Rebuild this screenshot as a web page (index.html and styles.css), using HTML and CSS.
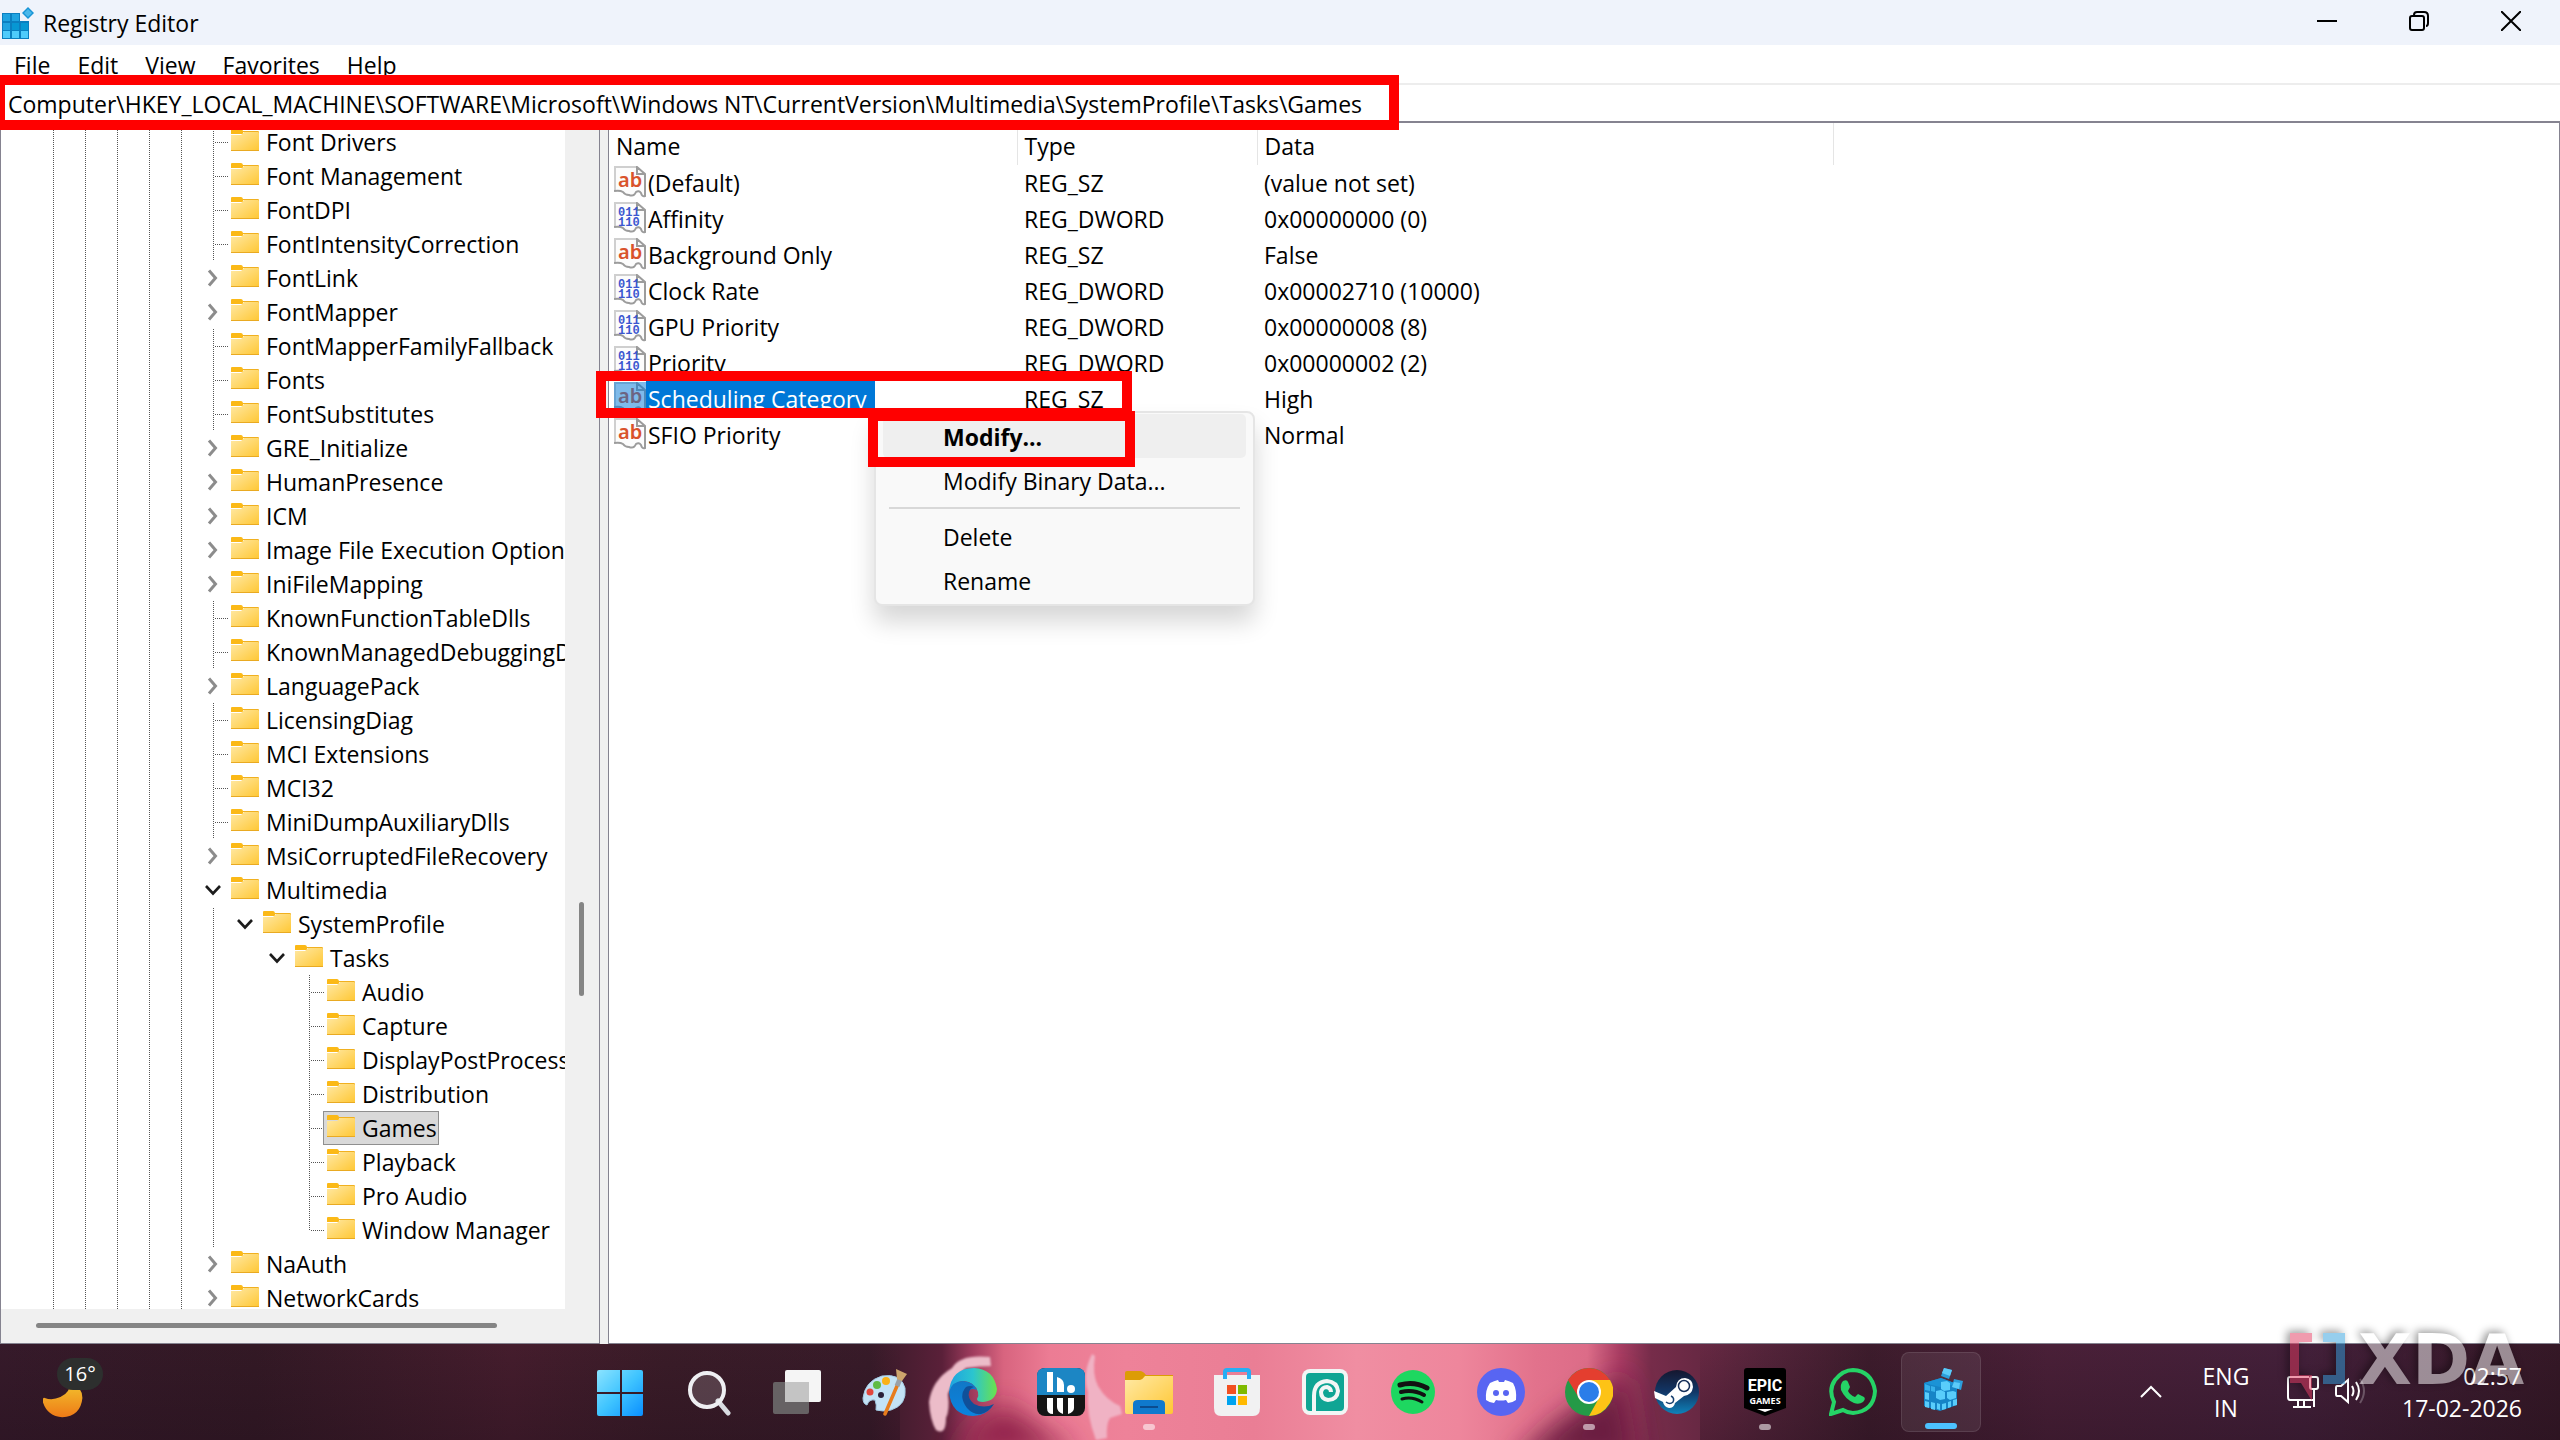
FILE: index.html
```html
<!DOCTYPE html>
<html lang="en">
<head>
<meta charset="utf-8">
<title>Registry Editor</title>
<link rel="stylesheet" href="styles.css">
</head>
<body>
<svg class="defs" aria-hidden="true">
  <defs>
    <linearGradient id="gFolder" x1="0" y1="0" x2="1" y2="1"><stop offset="0" stop-color="#ffe9a6"/><stop offset="1" stop-color="#ffc733"/></linearGradient>
    <symbol id="folder" viewBox="0 0 28 22">
      <path d="M0 1q0-1 1-1h9q1.500 0 2 2v3H0z" fill="#fbb917"/>
      <path d="M0 6h10l3-3h15v18q0 1-1 1H1q-1 0-1-1z" fill="url(#gFolder)"/>
      <path d="M12 2.500h15q1 0 1 1" fill="none" stroke="#f0b020"/>
      <path d="M0 21.500h28" stroke="#e9aa22"/>
    </symbol>
    <symbol id="closed" viewBox="0 0 12 18"><path d="M2 1.500l6.500 7.500L2 16.500" fill="none" stroke="#8c8c8c" stroke-width="3"/></symbol>
    <symbol id="open" viewBox="0 0 16 12"><path d="M1 2l7 7.500L15 2" fill="none" stroke="#1c1c1c" stroke-width="2.600"/></symbol>
    <symbol id="page" viewBox="0 0 32 32">
      <path d="M1 1h22l8 8v22l-5-6h-4l-3 4h-6l-4-4H1z" fill="#fcfcfc"/>
      <path d="M1 25V1h22" fill="none" stroke="#cfcfcf" stroke-width="2"/>
      <path d="M23 1v7h8zM31 8v22q-3 1-4-3-2-3-5-1-2 5-7 3-4 0-6-3-3-2-9-1" fill="none" stroke="#9c9c9c" stroke-width="2"/>
    </symbol>
    <symbol id="sz" viewBox="0 0 32 32"><use href="#page"/><text x="4" y="21" class="glyph-ab">ab</text></symbol>
    <symbol id="dword" viewBox="0 0 32 32"><use href="#page"/><text x="4" y="14" class="glyph-bin">011</text><text x="4" y="24" class="glyph-bin">110</text></symbol>
  </defs>
</svg>

<main class="window">
  <header class="titlebar">
    <svg class="app-icon" viewBox="0 0 32 32">
      <rect x="0" y="6" width="27" height="26" fill="#0b7fc0"/>
      <g fill="#1fa3e0"><rect x="1" y="7" width="7" height="7"/><rect x="1" y="16" width="7" height="7"/><rect x="10" y="7" width="7" height="7"/></g>
      <g fill="#0797d3"><rect x="10" y="16" width="7" height="7"/><rect x="19" y="16" width="7" height="7"/></g>
      <g fill="#4fcbfb"><rect x="1" y="24" width="7" height="7"/><rect x="10" y="24" width="7" height="7"/><rect x="19" y="24" width="7" height="7"/></g>
      <path d="M18 5h9v9h-9z" fill="#eff3fb"/>
      <path d="M26 0l6 6-6 6-6-6z" fill="#1794d6"/><path d="M26 2l4 4-4 4-4-4z" fill="#4ab8ea"/>
    </svg>
    <h1>Registry Editor</h1>
    <div class="win-controls">
      <button aria-label="Minimize"><svg viewBox="0 0 20 20"><path d="M0 10h20" /></svg></button>
      <button aria-label="Restore"><svg viewBox="0 0 20 20"><rect x="1" y="5" width="14" height="14" rx="2"/><path d="M5 4q0-3 3-3h7q4 0 4 4v7q0 3-2 3"/></svg></button>
      <button aria-label="Close"><svg viewBox="0 0 20 20"><path d="M0 0l20 20M20 0L0 20"/></svg></button>
    </div>
  </header>
  <nav class="menubar"><button>File</button><button>Edit</button><button>View</button><button>Favorites</button><button>Help</button></nav>
  <div class="address">
    <input aria-label="Address" value="Computer\HKEY_LOCAL_MACHINE\SOFTWARE\Microsoft\Windows NT\CurrentVersion\Multimedia\SystemProfile\Tasks\Games">
    <div class="mark mark-address"></div>
  </div>

  <div class="panes">
    <section class="tree-pane">
      <div class="tree">
        <ul class="guides">
          <li class="leaf"><button class="node"><svg><use href="#folder"/></svg>Font Drivers</button></li>
          <li class="leaf"><button class="node"><svg><use href="#folder"/></svg>Font Management</button></li>
          <li class="leaf"><button class="node"><svg><use href="#folder"/></svg>FontDPI</button></li>
          <li class="leaf"><button class="node"><svg><use href="#folder"/></svg>FontIntensityCorrection</button></li>
          <li><button class="twist" aria-label="Expand"><svg class="c"><use href="#closed"/></svg></button><button class="node"><svg><use href="#folder"/></svg>FontLink</button></li>
          <li><button class="twist" aria-label="Expand"><svg class="c"><use href="#closed"/></svg></button><button class="node"><svg><use href="#folder"/></svg>FontMapper</button></li>
          <li class="leaf"><button class="node"><svg><use href="#folder"/></svg>FontMapperFamilyFallback</button></li>
          <li class="leaf"><button class="node"><svg><use href="#folder"/></svg>Fonts</button></li>
          <li class="leaf"><button class="node"><svg><use href="#folder"/></svg>FontSubstitutes</button></li>
          <li><button class="twist" aria-label="Expand"><svg class="c"><use href="#closed"/></svg></button><button class="node"><svg><use href="#folder"/></svg>GRE_Initialize</button></li>
          <li><button class="twist" aria-label="Expand"><svg class="c"><use href="#closed"/></svg></button><button class="node"><svg><use href="#folder"/></svg>HumanPresence</button></li>
          <li><button class="twist" aria-label="Expand"><svg class="c"><use href="#closed"/></svg></button><button class="node"><svg><use href="#folder"/></svg>ICM</button></li>
          <li><button class="twist" aria-label="Expand"><svg class="c"><use href="#closed"/></svg></button><button class="node"><svg><use href="#folder"/></svg>Image File Execution Options</button></li>
          <li><button class="twist" aria-label="Expand"><svg class="c"><use href="#closed"/></svg></button><button class="node"><svg><use href="#folder"/></svg>IniFileMapping</button></li>
          <li class="leaf"><button class="node"><svg><use href="#folder"/></svg>KnownFunctionTableDlls</button></li>
          <li class="leaf"><button class="node"><svg><use href="#folder"/></svg>KnownManagedDebuggingDlls</button></li>
          <li><button class="twist" aria-label="Expand"><svg class="c"><use href="#closed"/></svg></button><button class="node"><svg><use href="#folder"/></svg>LanguagePack</button></li>
          <li class="leaf"><button class="node"><svg><use href="#folder"/></svg>LicensingDiag</button></li>
          <li class="leaf"><button class="node"><svg><use href="#folder"/></svg>MCI Extensions</button></li>
          <li class="leaf"><button class="node"><svg><use href="#folder"/></svg>MCI32</button></li>
          <li class="leaf"><button class="node"><svg><use href="#folder"/></svg>MiniDumpAuxiliaryDlls</button></li>
          <li><button class="twist" aria-label="Expand"><svg class="c"><use href="#closed"/></svg></button><button class="node"><svg><use href="#folder"/></svg>MsiCorruptedFileRecovery</button></li>
          <li><button class="twist" aria-label="Collapse"><svg class="o"><use href="#open"/></svg></button><button class="node"><svg><use href="#folder"/></svg>Multimedia</button>
            <ul class="sub lined">
              <li><button class="twist" aria-label="Collapse"><svg class="o"><use href="#open"/></svg></button><button class="node"><svg><use href="#folder"/></svg>SystemProfile</button>
                <ul class="sub">
                  <li><button class="twist" aria-label="Collapse"><svg class="o"><use href="#open"/></svg></button><button class="node"><svg><use href="#folder"/></svg>Tasks</button>
                    <ul class="sub">
                      <li class="leaf"><button class="node"><svg><use href="#folder"/></svg>Audio</button></li>
                      <li class="leaf"><button class="node"><svg><use href="#folder"/></svg>Capture</button></li>
                      <li class="leaf"><button class="node"><svg><use href="#folder"/></svg>DisplayPostProcessing</button></li>
                      <li class="leaf"><button class="node"><svg><use href="#folder"/></svg>Distribution</button></li>
                      <li class="leaf"><button class="node selected"><svg><use href="#folder"/></svg>Games</button></li>
                      <li class="leaf"><button class="node"><svg><use href="#folder"/></svg>Playback</button></li>
                      <li class="leaf"><button class="node"><svg><use href="#folder"/></svg>Pro Audio</button></li>
                      <li class="leaf last"><button class="node"><svg><use href="#folder"/></svg>Window Manager</button></li>
                    </ul>
                  </li>
                </ul>
              </li>
            </ul>
          </li>
          <li><button class="twist" aria-label="Expand"><svg class="c"><use href="#closed"/></svg></button><button class="node"><svg><use href="#folder"/></svg>NaAuth</button></li>
          <li><button class="twist" aria-label="Expand"><svg class="c"><use href="#closed"/></svg></button><button class="node"><svg><use href="#folder"/></svg>NetworkCards</button></li>
        </ul>
      </div>
      <div class="vscroll"><i></i><b></b><i></i></div>
      <div class="hscroll"><b></b></div>
    </section>

    <section class="list-pane">
      <table>
        <colgroup><col class="c-name"><col class="c-type"><col class="c-data"><col></colgroup>
        <thead><tr><th>Name</th><th>Type</th><th>Data</th><th></th></tr></thead>
        <tbody>
          <tr><td><svg><use href="#sz"/></svg><span>(Default)</span></td><td>REG_SZ</td><td>(value not set)</td><td></td></tr>
          <tr><td><svg><use href="#dword"/></svg><span>Affinity</span></td><td>REG_DWORD</td><td>0x00000000 (0)</td><td></td></tr>
          <tr><td><svg><use href="#sz"/></svg><span>Background Only</span></td><td>REG_SZ</td><td>False</td><td></td></tr>
          <tr><td><svg><use href="#dword"/></svg><span>Clock Rate</span></td><td>REG_DWORD</td><td>0x00002710 (10000)</td><td></td></tr>
          <tr><td><svg><use href="#dword"/></svg><span>GPU Priority</span></td><td>REG_DWORD</td><td>0x00000008 (8)</td><td></td></tr>
          <tr><td><svg><use href="#dword"/></svg><span>Priority</span></td><td>REG_DWORD</td><td>0x00000002 (2)</td><td></td></tr>
          <tr class="picked"><td><svg><use href="#sz"/><rect width="32" height="32" fill="#0078d7" fill-opacity=".5"/></svg><span>Scheduling Category</span></td><td>REG_SZ</td><td>High</td><td></td></tr>
          <tr><td><svg><use href="#sz"/></svg><span>SFIO Priority</span></td><td>REG_SZ</td><td>Normal</td><td></td></tr>
        </tbody>
      </table>
      <div class="context-menu" role="menu">
        <button class="hot">Modify...</button>
        <button>Modify Binary Data...</button>
        <hr>
        <button>Delete</button>
        <button>Rename</button>
      </div>
      <div class="mark mark-row"></div>
      <div class="mark mark-modify"></div>
    </section>
  </div>
</main>

<footer class="taskbar">
  <svg class="wallpaper" viewBox="0 0 2560 96" preserveAspectRatio="none" aria-hidden="true">
    <defs>
      <linearGradient id="wall"><stop offset="0" stop-color="#361a2a"/><stop offset=".1" stop-color="#331925"/><stop offset=".2" stop-color="#451d2d"/><stop offset=".26" stop-color="#3a1c28"/><stop offset=".34" stop-color="#381b29"/><stop offset=".368" stop-color="#5a2039"/><stop offset=".38" stop-color="#a03c5e"/><stop offset=".392" stop-color="#d8647f"/><stop offset=".41" stop-color="#ec7c94"/><stop offset=".44" stop-color="#ee8299"/><stop offset=".49" stop-color="#ea7e95"/><stop offset=".53" stop-color="#f08ea2"/><stop offset=".57" stop-color="#ee869c"/><stop offset=".6" stop-color="#e2728c"/><stop offset=".62" stop-color="#dc6c88"/><stop offset=".633" stop-color="#a83c62"/><stop offset=".645" stop-color="#762c4a"/><stop offset=".69" stop-color="#54243a"/><stop offset=".73" stop-color="#3d1c2c"/><stop offset=".8" stop-color="#4a2038"/><stop offset=".9" stop-color="#43203a"/><stop offset="1" stop-color="#351826"/></linearGradient>
      <linearGradient id="shade" x2="0" y2="1"><stop offset="0" stop-color="#1c0c18" stop-opacity="0"/><stop offset="1" stop-color="#1c0c18" stop-opacity=".3"/></linearGradient>
      <filter id="soft" x="-20%" y="-20%" width="140%" height="140%"><feGaussianBlur stdDeviation="1"/></filter>
      <filter id="softer" x="-50%" y="-50%" width="200%" height="200%"><feGaussianBlur stdDeviation="14"/></filter>
    </defs>
    <rect width="2560" height="96" fill="url(#wall)"/>
    <rect width="900" height="96" fill="url(#shade)"/><rect x="1700" width="860" height="96" fill="url(#shade)"/>
    <path d="M950 110L1000 60L1080 110z" fill="#8e2048" filter="url(#softer)"/>
    <path d="M1510 120L1560 76L1625 30L1640 120z" fill="#6a1f40" filter="url(#softer)"/>
    <g filter="url(#soft)" fill="#ecbcc9">
      <path d="M990 13Q960 10 952 24Q932 36 929 58Q930 76 936 86Q946 92 946 74Q950 66 948 50Q954 34 966 24Q980 22 991 22z"/>
      <path d="M1092 10Q1082 30 1088 48Q1086 70 1096 96L1107 94Q1106 80 1110 74L1122 70L1120 62Q1106 56 1098 42Q1092 30 1095 12z" fill="#f0b2c4"/>
    </g>
  </svg>

  <button class="weather" aria-label="Weather">
    <svg viewBox="0 0 48 48"><defs><linearGradient id="moon" x2="0" y2="1"><stop offset="0" stop-color="#f3c62f"/><stop offset="1" stop-color="#ee7a17"/></linearGradient></defs><path d="M30 6q13 6 13 18-2 20-22 21-16-1-21-16-1-6 2-5 8 3 17-1 11-5 11-17z" fill="url(#moon)"/></svg>
    <span>16°</span>
  </button>

  <nav class="apps">
    <button aria-label="Start"><svg viewBox="0 0 48 48"><defs><linearGradient id="win" x2="1" y2="1"><stop offset="0" stop-color="#8be3ff"/><stop offset=".5" stop-color="#3fc4ff"/><stop offset="1" stop-color="#0a8fff"/></linearGradient></defs><path d="M2 2h21v22H0V4q0-2 2-2zM25 2h19q2 0 2 2v20H25zM0 26h23v22H2q-2 0-2-2zM25 26h21v20q0 2-2 2H25z" fill="url(#win)"/></svg></button>
    <button aria-label="Search"><svg viewBox="0 0 48 48"><path d="M33 33l10 12" stroke="#d9dce1" stroke-width="5" stroke-linecap="round"/><circle cx="22" cy="22" r="17" fill="#fff" fill-opacity=".16" stroke="#eeeff2" stroke-width="4"/></svg></button>
    <button aria-label="Task view"><svg viewBox="0 0 48 48"><rect x="12" y="2" width="36" height="32" rx="2" fill="#f5f5f5"/><rect x="0" y="14" width="36" height="32" rx="2" fill="#707070" fill-opacity=".85"/><rect x="12" y="14" width="24" height="20" fill="#c4c4c4"/></svg></button>
    <button aria-label="Paint"><svg viewBox="0 0 48 48"><path d="M2 30Q4 13 21 8q19-3 23 12 2 17-14 22-8 2-15 0 1-5-1-10-6-1-8 5-4-1-4-7z" fill="#c3e2f5" stroke="#a3cbe4"/><circle cx="20" cy="27" r="3" fill="#2b2038"/><circle cx="9" cy="24" r="3.500" fill="#e2463c"/><circle cx="16" cy="17" r="4" fill="#5fbb45"/><circle cx="25" cy="13" r="4" fill="#fbb116"/><path d="M24 46L36 18" stroke="#e77c1c" stroke-width="3.500" stroke-linecap="round"/><path d="M36 18l3-7" stroke="#9aa0a8" stroke-width="5"/><path d="M36 11l-1-10 11 5-5 7z" fill="#cda56c"/></svg></button>
    <button aria-label="Edge"><svg viewBox="0 0 48 48"><defs><linearGradient id="e1"><stop offset="0" stop-color="#1fa2e0"/><stop offset=".5" stop-color="#2bc5cf"/><stop offset="1" stop-color="#6be24b"/></linearGradient><linearGradient id="e2" x2="0" y2="1"><stop offset="0" stop-color="#1177c6"/><stop offset="1" stop-color="#0a84e0"/></linearGradient></defs><path d="M0 24Q2 0 25 0q20 1 23 21-1 12-14 13-6 0-6-3 2-3 1-7-3-10-15-11Q4 14 0 24z" fill="url(#e1)"/><path d="M0 24q3-11 14-11 11 1 14 9-8-3-9 4 1 12 17 14 5 0 8-3-7 11-20 11Q2 47 0 24z" fill="url(#e2)"/><path d="M17 19q-8 9 1 21 6 7 14 6 8-2 13-10-10 5-20 0-7-6-5-12 1-4 5-5-4-2-8 0z" fill="#10509a"/></svg></button>
    <button aria-label="Headway"><svg viewBox="0 0 48 48"><rect width="48" height="48" rx="8" fill="#151515"/><path d="M0 27V8q0-8 8-8h32q8 0 8 8v19z" fill="#1c86c4"/><path d="M10 4h6v20h-6zM20 9q7 2 7 8v7h-7zM10 30h6v16q-6 0-6-6zM20 30h6v16q-6-2-6-7zM31 30h6v10q0 4-6 6z" fill="#fff"/><circle cx="34" cy="21" r="4" fill="#fff"/></svg></button>
    <button class="running" aria-label="File Explorer"><svg viewBox="0 0 48 48"><path d="M0 5q0-2 2-2h13q3 0 6 4h27v8H0z" fill="#dc9c06"/><path d="M0 12h15q3-1 5-4h28v36q0 2-2 2H2q-2 0-2-2z" fill="url(#gFolder)"/><path d="M8 46V36q0-4 5-4h22q5 0 5 4v10z" fill="#0f79cd"/><path d="M15 39h18" stroke="#0b4c8f" stroke-width="2"/></svg></button>
    <button aria-label="Store"><svg viewBox="0 0 48 48"><path d="M1 7h46v33q0 8-7 8H8q-7 0-7-8z" fill="#f1f1f2"/><path d="M12 11V4q0-2 2-2h20q2 0 2 2v7" fill="none" stroke="#27aef4" stroke-width="4"/><path d="M14 17h9v9h-9z" fill="#f25022"/><path d="M25 17h9v9h-9z" fill="#7fba00"/><path d="M14 28h9v9h-9z" fill="#00a4ef"/><path d="M25 28h9v9h-9z" fill="#ffb900"/></svg></button>
    <button aria-label="Photopea"><svg viewBox="0 0 48 48"><rect x="1" y="1" width="46" height="46" rx="8" fill="#f2f6f5"/><rect x="5" y="5" width="38" height="38" rx="4" fill="#0fa594"/><path d="M13 44V28q0-14 13-15 10 1 11 10-1 9-10 9-7-1-7-8 1-5 6-5 4 1 4 5" fill="none" stroke="#f2f6f5" stroke-width="4"/></svg></button>
    <button aria-label="Spotify"><svg viewBox="0 0 48 48"><circle cx="24" cy="24" r="22" fill="#1ed760"/><g fill="none" stroke="#121212" stroke-linecap="round"><path d="M11 17q14-4 27 3" stroke-width="5"/><path d="M12 24q12-3 23 3" stroke-width="4"/><path d="M13 31q10-3 20 3" stroke-width="3"/></g></svg></button>
    <button aria-label="Discord"><svg viewBox="0 0 48 48"><circle cx="24" cy="24" r="24" fill="#5865f2"/><path d="M13 15q4-2 8-3l1 2h5l1-2q4 1 8 3 4 7 3 17-4 3-8 3l-2-3q-5 1-10 0l-2 3q-4 0-8-3-1-10 4-17z" fill="#fff"/><circle cx="19" cy="25" r="3" fill="#5865f2"/><circle cx="29" cy="25" r="3" fill="#5865f2"/></svg></button>
    <button class="running" aria-label="Chrome"><svg viewBox="0 0 48 48"><circle cx="24" cy="24" r="24" fill="#249a47"/><path d="M3 12Q11 0 24 0t21 12H24L14 30z" fill="#e43e2f"/><path d="M24 12h21q7 12 0 23-8 13-21 13l10-18z" fill="#fdc316"/><circle cx="24" cy="24" r="12" fill="#fff"/><circle cx="24" cy="24" r="10" fill="#2b7de9"/></svg></button>
    <button aria-label="Steam"><svg viewBox="0 0 48 48"><defs><linearGradient id="st" x2="0" y2="1"><stop offset="0" stop-color="#15172f"/><stop offset=".5" stop-color="#123767"/><stop offset="1" stop-color="#0e83ba"/></linearGradient></defs><circle cx="24" cy="24" r="22" fill="url(#st)"/><path d="M1 23l12 5 10-9q1-9 9-9 8 1 8 9-1 8-9 9l-9 7q-1 5-6 5-5-1-6-6l-8-4z" fill="#fff"/><circle cx="31" cy="18" r="5.500" fill="#fff" stroke="#17305a" stroke-width="1.500"/><path d="M13 34q4 3 7 0 2-4-2-6" fill="none" stroke="#17406f" stroke-width="1.500"/></svg></button>
    <button class="running" aria-label="Epic Games"><svg viewBox="0 0 48 48"><path d="M3 3q0-3 3-3h36q3 0 3 3v37L24 48 3 40z" fill="#000"/><text x="24" y="23" text-anchor="middle" class="glyph-epic">EPIC</text><text x="24" y="36" text-anchor="middle" class="glyph-games">GAMES</text><path d="M16 41h16l-8 3z" fill="#fff"/></svg></button>
    <button aria-label="WhatsApp"><svg viewBox="0 0 48 48"><path d="M2 46l3-12Q-1 22 6 12 14 2 24 2q19 1 22 21-1 20-22 22-5 0-10-3z" fill="none" stroke="#25d366" stroke-width="4"/><path d="M14 13q4-2 5 1l2 5-2 4q2 4 7 6l3-3 6 3q2 2-1 5-4 3-9 1-9-4-13-13-1-6 2-9z" fill="#25d366"/></svg></button>
    <button class="running active" aria-label="Registry Editor"><svg viewBox="0 0 48 48"><path d="M7 15l17-5 16 6v21l-17 6-16-5z" fill="#1684c6"/><path d="M7 15l17-5 16 6-17 3z" fill="#1b93d6"/><g fill="#59cdfb"><path d="M8 24l4 1v7l-4-1zM8 33l4 1v6l-4-1zM14 34l4 1v7l-4-1zM20 35l3 1v6l-3-1zM24 14l6-1 3 2v7l-6 1-3-2zM19 23l5-1 4 2v7l-5 1-4-2zM30 24l6-1 3 1v6l-6 2-3-2zM25 36l4-1v6l-4 1zM31 34l3-1v6l-3 1zM36 32l4-1v6l-4 1z"/></g><path d="M8 16l5 2v5l-5-1zM14 18l4 1v5l-4-1z" fill="#37b1ea"/><path d="M27 0l8 2-3 9-8-3z" fill="#2c9fdc"/><path d="M27 0l8 2-2 6-8-3z" fill="#5ccbf9"/><path d="M37 11l9 2-2 9-9-3z" fill="#2c9fdc"/><path d="M37 14l6 1-1 6-7-2z" fill="#5ccbf9"/></svg></button>
  </nav>

  <div class="tray">
    <button class="more" aria-label="Show hidden icons"><svg viewBox="0 0 22 14"><path d="M1 12L11 2l10 10"/></svg></button>
    <button class="lang">ENG<br>IN</button>
    <button class="status" aria-label="Network and volume">
      <svg viewBox="0 0 32 34"><path d="M22 2H3q-2 0-2 2v18q0 3 2 3h24V16M6 32h18M11 25v7M17 25v7M27 14v18"/><rect x="23" y="2" width="8" height="12" rx="2"/></svg>
      <svg viewBox="0 0 32 34"><path d="M1 13q0-2 1-2h4l7-6v22l-7-6H2q-1 0-1-2zM17 11q3 5 0 10M21 7q6 9 0 18"/><path d="M25 4q8 12 0 24" stroke-opacity=".25"/></svg>
    </button>
    <button class="clock">02:57<br>17-02-2026</button>
  </div>
</footer>

<svg class="watermark" viewBox="0 0 290 90" role="img" aria-label="XDA">
  <g>
    <path d="M20 13h22v9H29v33h13v26L31 63H20z" fill="#e23a60"/>
    <path d="M53 13h22v51H53v-9h13V22H53z" fill="#2f9fdc"/>
    <text x="88" y="64" class="glyph-xda">XDA</text>
  </g>
</svg>
</body>
</html>
```
FILE: styles.css
```css
* { box-sizing: border-box; }
body {
  margin: 0;
  height: 100vh;
  display: flex;
  flex-direction: column;
  position: relative;
  overflow: hidden;
  background: #fff;
  color: #000;
  font: 23px/34px "Open Sans", "Noto Sans", sans-serif;
}
button, input { font: inherit; color: inherit; border: 0; background: none; padding: 0; margin: 0; }
ul { list-style: none; margin: 0; padding: 0; }
.defs { position: absolute; width: 0; height: 0; }

.window { flex: 1; min-height: 0; display: flex; flex-direction: column; }

.titlebar { display: flex; align-items: center; height: 45px; background: #eff3fb; padding: 0 3px 0 2px; }
.app-icon { width: 32px; height: 32px; }
.titlebar h1 { flex: 1; margin: 0 0 0 9px; font-size: 23px; font-weight: 400; }
.win-controls { display: flex; align-self: stretch; }
.win-controls button { width: 92px; display: grid; place-items: center; padding-bottom: 4px; }
.win-controls svg { width: 20px; height: 20px; fill: none; stroke: #000; stroke-width: 2; }

.menubar { display: flex; height: 38px; padding: 3px 0 0 1px; }
.menubar button { height: 34px; padding: 0 14px 0 13px; }

.address { position: relative; z-index: 1; border-top: 2px solid #ededed; border-bottom: 2px solid #858390; }
.address input { display: block; width: 100%; height: 36px; padding: 2px 8px 0; outline: 0; }

.panes { flex: 1; min-height: 0; display: flex; gap: 8px; background: #f0f0f0; }
.tree-pane {
  width: 600px;
  flex: none;
  display: grid;
  grid-template: minmax(0, 1fr) 34px / minmax(0, 1fr) 34px;
  border: 1px solid #858390;
  border-top: 0;
  background: #f0f0f0;
}
.tree { overflow: hidden; padding-top: 2px; background: #fff; white-space: nowrap; }
.guides {
  width: 720px;
  padding-left: 196px;
  background:
    repeating-linear-gradient(#fff 0 1px, transparent 1px 2px),
    repeating-linear-gradient(90deg, #555 0 1px, transparent 1px 32px) 52px 0 / 160px 100% no-repeat;
}
.guides li { display: flex; flex-wrap: wrap; min-height: 34px; background: #fff; }
.sub { width: 100%; padding-left: 32px; }
.lined {
  background:
    repeating-linear-gradient(#fff 0 1px, transparent 1px 2px),
    linear-gradient(#555 0 0) 16px 0 / 1px 100% no-repeat;
}
.leaf::before {
  content: "";
  width: 32px;
  margin-right: -2px;
  height: 34px;
  background:
    repeating-linear-gradient(#555 0 1px, transparent 1px 2px) 16px 0 / 1px 100% no-repeat,
    repeating-linear-gradient(90deg, #555 0 1px, transparent 1px 2px) 18px 17px / 14px 1px no-repeat;
}
.leaf.last::before { background-size: 1px 17px, 14px 1px; }
.twist { width: 30px; height: 34px; display: grid; place-items: center; padding-left: 2px; }
.twist .c { width: 12px; height: 18px; }
.twist .o { width: 16px; height: 12px; }
.node { display: flex; height: 34px; align-items: center; gap: 7px; padding: 0 4px; line-height: 34px; }
.node svg { width: 28px; height: 22px; margin-bottom: 4px; }
.node.selected { background: #d9d9d9; outline: 1px solid #8f8f8f; outline-offset: -1px; padding-right: 2px; }

.vscroll { display: flex; flex-direction: column; align-items: center; padding-right: 1px; }
.vscroll i { flex: 780 0 0; }
.vscroll i:last-child { flex-grow: 313; }
.vscroll b { width: 5px; height: 94px; border-radius: 3px; background: #858585; }
.hscroll { grid-column: 1 / 3; display: flex; align-items: center; padding: 0 0 2px 35px; }
.hscroll b { width: 461px; height: 5px; border-radius: 3px; background: #858585; }

.list-pane { position: relative; flex: 1; min-width: 0; background: #fff; border: 1px solid #858390; border-top: 0; }
table { width: 100%; table-layout: fixed; border-collapse: collapse; }
.c-name { width: 408px; }
.c-type { width: 240px; }
.c-data { width: 576px; }
th { height: 42px; padding: 4px 0 0 7px; font-weight: 400; text-align: left; border-right: 1px solid #e5e5e5; }
th:last-child { border-right: 0; }
td { height: 36px; padding: 0 0 0 7px; white-space: nowrap; line-height: 36px; }
td:first-child { display: flex; padding-left: 5px; }
td svg { width: 32px; height: 32px; margin-top: 1px; }
td span { padding: 0 2px; }
.picked span { background: #0078d7; color: #fff; padding-right: 8px; }
.glyph-ab { font: 600 20px "Noto Sans", sans-serif; fill: #d9532c; }
.glyph-bin { font: 700 12px "Liberation Mono", monospace; fill: #3b57d0; }

.context-menu {
  position: absolute;
  top: 288px;
  left: 265px;
  width: 381px;
  padding: 1px 7px 2px;
  border: 2px solid #e5e5e5;
  border-radius: 8px;
  background: #f9f9f9;
  box-shadow: 0 16px 24px rgba(0, 0, 0, .16);
}
.context-menu button { display: block; width: 100%; height: 44px; padding: 2px 0 0 60px; text-align: left; border-radius: 5px; }
.context-menu .hot { background: #efefef; font-weight: 700; }
.context-menu hr { height: 2px; margin: 5px 6px; border: 0; background: #d8d8d8; }

.mark { position: absolute; border: 10px solid #f00; pointer-events: none; }
.mark-address { top: -10px; left: -5px; width: 1404px; height: 55px; }
.mark-row { top: 248px; left: -13px; width: 536px; height: 47px; }
.mark-modify { top: 288px; left: 259px; width: 267px; height: 56px; }

.taskbar {
  position: relative;
  flex: none;
  height: 96px;
  display: grid;
  grid-template-columns: 1fr auto 1fr;
  align-items: center;
  color: #fff;
}
.taskbar > * { position: relative; }
.taskbar > .wallpaper { position: absolute; width: 100%; height: 100%; }
.weather { width: 66px; height: 64px; margin-left: 40px; justify-self: start; display: flex; align-items: flex-end; padding: 0 0 4px 3px; }
.weather svg { width: 44px; height: 44px; }
.weather span { position: absolute; top: -2px; right: 3px; width: 46px; height: 32px; border-radius: 16px; background: #2d2f2e; font-size: 20px; line-height: 32px; text-align: center; }
.apps { display: flex; gap: 8px; padding-left: 2px; }
.apps button { position: relative; width: 80px; height: 80px; display: grid; place-items: center; border-radius: 8px; }
.apps svg { width: 48px; height: 48px; }
.apps .running::after { content: ""; position: absolute; bottom: 2px; left: 34px; width: 12px; height: 6px; border-radius: 3px; background: rgba(255, 255, 255, .55); }
.apps .active { background: rgba(255, 255, 255, .08); border: 1px solid rgba(255, 255, 255, .1); }
.apps .active::after { left: 23px; width: 32px; background: #4cc2ff; }
.glyph-epic { font: 700 16px "Roboto", sans-serif; fill: #fff; }
.glyph-games { font: 700 9px "Open Sans", sans-serif; fill: #fff; }

.tray { justify-self: end; display: flex; align-items: center; padding-right: 38px; line-height: 32px; }
.tray svg { fill: none; stroke: #fff; stroke-width: 2; }
.more svg { display: block; width: 22px; height: 14px; }
.lang { width: 64px; margin-left: 32px; text-align: center; }
.status { display: flex; gap: 16px; margin: 0 35px 0 29px; }
.status svg { width: 32px; height: 34px; }
.clock { text-align: right; }

.watermark { position: absolute; right: 0; bottom: 30px; width: 290px; height: 90px; pointer-events: none; }
.watermark g { opacity: .5; filter: drop-shadow(-3px -2px 4px rgba(0, 0, 0, .8)); }
.glyph-xda { font: 700 70px "DejaVu Sans", sans-serif; fill: #fff; }
```
